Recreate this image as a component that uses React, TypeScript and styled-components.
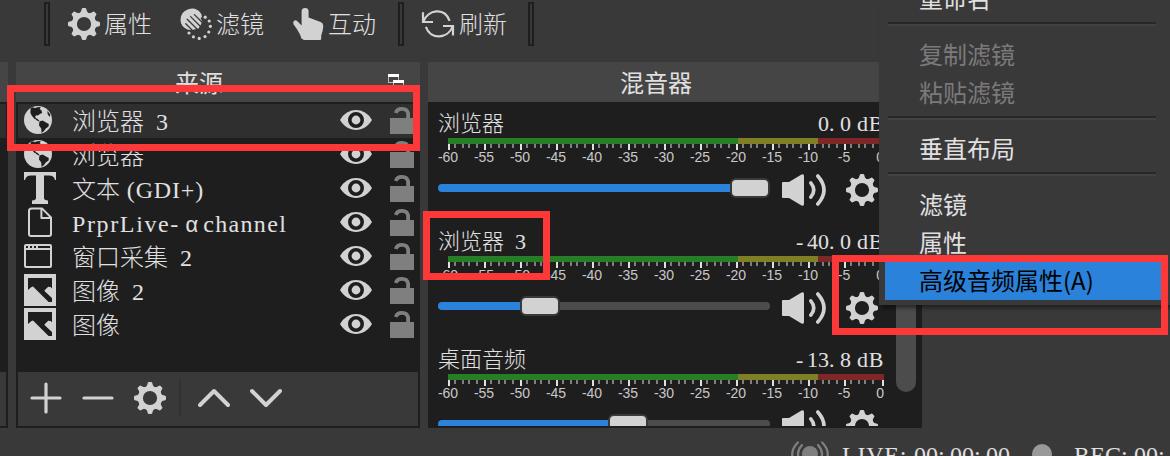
import React from 'react';
import styled, { createGlobalStyle } from 'styled-components';

const c = {
  bg: '#3a393a',
  header: '#464546',
  dark: '#1f1e1f',
  row: '#302f30',
  text: '#e1e0e1',
  icon: '#d2d2d2',
  lock: '#7f7f7f',
  groove: '#4c4c4c',
  blue: '#2a82da',
  red: '#fd3838',
};

const Global = createGlobalStyle`
  body { margin: 0; background: ${c.bg}; overflow: hidden; }
  * { box-sizing: border-box; }
  svg { display: block; flex: none; }
`;

const Window = styled.div`
  position: relative;
  width: 1170px;
  height: 456px;
  overflow: hidden;
  display: flex;
  flex-direction: column;
  background: ${c.bg};
  color: ${c.text};
  font-family: 'Noto Sans CJK SC', sans-serif;
  font-size: 24px;
`;

/* ---------- text with half-width latin cells ---------- */

const Cells = styled.span<{ $size: number }>`
  display: block;
  white-space: pre;
  font-family: 'Noto Sans CJK SC', sans-serif;
  font-weight: 300;
  font-size: ${(p) => p.$size}px;
  line-height: ${(p) => p.$size + 8}px;
`;

const Latin = styled.span<{ $track: number }>`
  font-family: 'Liberation Serif', serif;
  font-weight: 400;
  letter-spacing: ${(p) => p.$track}em;
  line-height: 0;
`;

const Alpha = styled.span`
  padding: 0 5px;
  font-family: 'Liberation Mono', monospace;
  font-size: 22px;
  line-height: 0;
`;

/* advance widths in em, used to spread a run over half-em cells */
const advance: Record<string, number> = {
  P: 0.556, r: 0.333, L: 0.611, i: 0.278, e: 0.444, '-': 0.333, c: 0.444, a: 0.444, l: 0.278,
  G: 0.722, D: 0.722, I: 0.333, '+': 0.564, '(': 0.333, ')': 0.333, B: 0.667, V: 0.722,
  E: 0.611, ':': 0.278, R: 0.667, C: 0.667, ' ': 0.25, '.': 0.25,
};

const tracking = (run: string) =>
  0.5 - [...run].reduce((sum, ch) => sum + (advance[ch] ?? 0.5), 0) / run.length;

function Label({ text, size = 24 }: { text: string; size?: number }) {
  const runs = text.match(/[0-9]+|[\x20-\x2f\x3a-\x7e]+|α|[^\x20-\x7eα]+/g) || [];
  return (
    <Cells $size={size}>
      {runs.map((run, i) => {
        if (run === 'α') return <Alpha key={i}>{run}</Alpha>;
        if (/^[\x20-\x7e]/.test(run)) return <Latin key={i} $track={tracking(run)}>{run}</Latin>;
        return <React.Fragment key={i}>{run}</React.Fragment>;
      })}
    </Cells>
  );
}

/* ---------- icons ---------- */

const teeth = [0, 45, 90, 135, 180, 225, 270, 315];

const Gear = () => (
  <svg width="32" height="32" viewBox="0 0 32 32" fill={c.icon}>
    <circle cx="16" cy="16" r="9.6" fill="none" stroke={c.icon} strokeWidth="5" />
    {teeth.map((a) => (
      <path key={a} d="M11 6 L13 3.6 L13.8 .8 Q14 0 15 0 H17 Q18 0 18.2 .8 L19 3.6 L21 6 Z" transform={`rotate(${a} 16 16)`} />
    ))}
  </svg>
);

const FilterIcon = () => (
  <svg width="32" height="32" viewBox="0 0 32 32" fill={c.icon}>
    <path d="M.5 12 A11.3 11.3 0 0 1 20.8 5.2 Q22 7 21.8 9 L20.6 10.2 L22.3 13.5 L20.6 17 L18.6 20.4 L15 21.2 L12.4 22 L8 21.8 Q.5 18.6 .5 12Z" />
    <g stroke={c.bg} strokeWidth="1.3" strokeLinecap="round">
      <path d="M5.8 15.8 L13 23" />
      <path d="M7.2 11.2 L17 21" />
      <path d="M10.6 8.6 L20 18" />
      <path d="M14.4 6.6 L22.6 14.8" />
    </g>
    {[[25.2, 9.2], [29.2, 13], [30.4, 18.3], [28.8, 24], [25, 28.6], [19.2, 30.4], [13.4, 28.8], [9, 25]].map(([x, y]) => (
      <circle key={x} cx={x} cy={y} r="1.6" />
    ))}
  </svg>
);

const Hand = () => (
  <svg width="32" height="32" viewBox="0 0 32 32" fill={c.icon}>
    <path d="M9.6 3.2 Q9.8 0 13.2 0 Q16.4 0 16.6 3.2 V9.6 L28.6 14 Q31.4 15.2 31.3 18 Q31 23 29.2 27.5 V31 Q29 32 28 32 H12 L9.4 30.6 C8.6 26 4.6 20.4 1.6 16.4 Q.6 14 2 12.8 Q3.6 11.6 5.4 13.2 L9.6 17.4Z" />
  </svg>
);

const Refresh = () => (
  <svg width="34" height="32" viewBox="0 0 34 32" fill="none" stroke={c.icon} strokeWidth="2.2">
    <path d="M2 4.2 V14 H12" />
    <path d="M2.4 13.6 C7 1.6 23.5 -1.2 28.6 12.8" />
    <path d="M32 27.6 V18 H22" />
    <path d="M31.6 18.6 C27 30.8 9.5 32.4 4.9 18.8" />
  </svg>
);

const Globe = () => (
  <svg width="28" height="28" viewBox="0 0 28 28">
    <circle cx="14" cy="14" r="14" fill={c.icon} />
    <g fill={c.dark}>
      <path d="M6.6 2.2 L9 1.2 L11 2.2 L13 1.2 L16.8 1 L15.6 3 L17.4 4.2 L18.2 7 L15.8 8 L14 9.4 L12.2 9.2 L11 11 L12.4 12.6 L10.6 13 L7.8 9.8 L6.4 7Z" />
      <path d="M10.8 12.2 L13 12.4 L15.4 14.8 L14.8 15.6 L12.2 14Z" />
      <path d="M15.4 15.4 L18.6 14.6 L22 16.4 L24.8 18 L24.6 20.4 L21.8 22.4 L20 25 L17.6 27 L17.2 22.6 L15 19.4Z" />
      <path d="M23.4 4.8 L26.4 8.8 L25.6 11 L23.6 8Z" />
    </g>
  </svg>
);

const TextIcon = () => (
  <svg width="32" height="32" viewBox="0 0 32 32" fill={c.icon}>
    <path d="M0 0 H32 V8 H31 Q30 3.6 25 3.6 H20 V26 Q20 28.4 24 28.4 V32 H8 V28.4 Q12 28.4 12 26 V3.6 H7 Q2 3.6 1 8 H0Z" />
  </svg>
);

const FileIcon = () => (
  <svg width="32" height="32" viewBox="0 0 32 32" fill="none" stroke={c.icon} strokeWidth="2" strokeLinejoin="round">
    <path d="M7.5 2.4 H18 L27 11.5 V28 Q27 30 25 30 H7 Q5 30 5 28 V4.9 Q5 2.4 7.5 2.4Z" />
    <path d="M17.4 2.6 V12 H26.8" />
  </svg>
);

const WindowIcon = () => (
  <svg width="32" height="32" viewBox="0 0 32 32">
    <rect x="1" y="5" width="26" height="22" rx="1" fill="none" stroke={c.icon} strokeWidth="2" />
    <path d="M0 6 H28 V10 H0Z" fill={c.icon} />
    <path d="M2 7 H4 M6 7 H8 M10 7 H12 M14 7 H26" stroke={c.dark} strokeWidth="2" />
  </svg>
);

const ImageIcon = () => (
  <svg width="32" height="32" viewBox="0 0 32 32">
    <path d="M0 0 H32 V32 H0Z" fill={c.icon} />
    <path d="M4 4 H28 V14.4 L26.4 12.8 L20.6 17 L28 24 V28 H24.6 L9 12.6 Q8 12.4 4 16Z" fill={c.dark} />
    <path d="M20.4 16.4 L24.2 12.8 Q25.2 12.4 26 13.2 L28 15 V23.6Z" fill={c.icon} />
  </svg>
);

const Eye = () => (
  <svg width="32" height="20" viewBox="0 0 32 20">
    <path d="M0 10 C7.5 -3.3 24.5 -3.3 32 10 C24.5 23.3 7.5 23.3 0 10Z" fill={c.icon} />
    <circle cx="16" cy="10" r="6.2" fill="none" stroke={c.dark} strokeWidth="3.6" />
  </svg>
);

const Lock = () => (
  <svg width="24" height="28" viewBox="0 0 24 28">
    <rect y="12" width="24" height="16" fill={c.lock} />
    <path d="M5.8 7 A6.3 5.4 0 0 1 18.1 7.4 V13" fill="none" stroke={c.lock} strokeWidth="3.8" />
  </svg>
);

const PopOutBox = styled.span`
  margin: 0 0 0 6px;
`;

const PopOut = () => (
  <PopOutBox>
    <svg width="16" height="16" viewBox="0 0 16 16" shapeRendering="crispEdges">
      <path d="M.5 1 V8.5 H10.5 V1" fill="none" stroke="#bbb" />
      <rect width="11" height="2.5" fill="#fff" />
      <rect x="5.5" y="7" width="10" height="7" fill={c.header} stroke="#bbb" />
      <rect x="5" y="6" width="11" height="3" fill="#fff" />
    </svg>
  </PopOutBox>
);

const Speaker = () => (
  <svg width="44" height="32" viewBox="0 0 44 32">
    <path d="M1 8 H7 L19.5 .6 Q22 -.6 22 2 V30 Q22 32.6 19.5 31.4 L7 24 H1 Q0 24 0 23 V9 Q0 8 1 8Z" fill={c.icon} />
    <g fill="none" stroke={c.icon} strokeWidth="3.6" strokeLinecap="round">
      <path d="M28.8 8.8 Q34.8 16 28.8 23.2" />
      <path d="M35.8 2 Q48.2 16 35.8 30" />
    </g>
  </svg>
);

const Stroke = ({ d, w = 4 }: { d: string; w?: number }) => (
  <svg width="32" height="32" viewBox="0 0 32 32" fill="none" stroke={c.icon} strokeWidth={w} strokeLinecap="round" strokeLinejoin="round">
    <path d={d} />
  </svg>
);

const Broadcast = () => (
  <svg width="38" height="26" viewBox="0 0 38 26" fill="none" stroke={c.lock} strokeWidth="2.2" strokeLinecap="round">
    <circle cx="19" cy="13" r="8" fill={c.lock} stroke="none" />
    <path d="M11 4 Q3 13 11 22 M27 4 Q35 13 27 22" />
    <path d="M6.8 1.4 Q-4.4 13 6.8 25 M31.2 1.4 Q42.4 13 31.2 25" />
  </svg>
);

/* ---------- toolbar ---------- */

const Toolbar = styled.div`
  display: flex;
  height: 62px;
  flex: none;
  padding-left: 44px;
  align-items: flex-start;
`;

const Handle = styled.i<{ $left?: number }>`
  width: 6px;
  height: 44px;
  margin: 2px 0 0 ${(p) => p.$left ?? 0}px;
  border: 2px solid ${c.dark};
`;

const ToolButton = styled.div<{ $left: number; $w: number }>`
  display: flex;
  align-items: center;
  gap: 4px;
  height: 48px;
  width: ${(p) => p.$w}px;
  margin-left: ${(p) => p.$left}px;

  ${Cells} {
    margin-bottom: 2px;
  }
`;

/* ---------- docks ---------- */

const Docks = styled.div`
  display: flex;
  height: 366px;
  flex: none;
`;

const Dock = styled.section<{ $w: number; $gap?: number }>`
  width: ${(p) => p.$w}px;
  margin-right: ${(p) => p.$gap ?? 8}px;
  background: ${c.dark};
  display: flex;
  flex-direction: column;
  overflow: hidden;
`;

const DockTitle = styled.header`
  height: 40px;
  flex: none;
  background: ${c.header};
  display: flex;
  align-items: center;
  padding-right: 16px;

  h2 {
    flex: 1;
    margin: 0;
    text-align: center;
    font-size: 24px;
    line-height: 32px;
    font-weight: 400;
  }
`;

const EdgeRow = styled.div`
  width: 6px;
  height: 34px;
  margin-top: 2px;
  background: ${c.row};
`;

const EdgeBar = styled.div`
  width: 6px;
  height: 54px;
  margin: auto 0 2px;
  background: ${c.bg};
`;

const List = styled.div`
  flex: 1;
  padding: 2px 2px 0;
`;

const SourceRow = styled.div<{ $selected?: boolean }>`
  height: 34px;
  display: flex;
  align-items: center;
  padding: 0 4px 0 6px;
  background: ${(p) => (p.$selected ? c.row : 'transparent')};
`;

const IconCell = styled.span`
  width: 48px;
  height: 32px;
  margin-bottom: 2px;
  display: flex;
  align-items: center;
`;

const RowName = styled.span`
  flex: 1;
  display: flex;
  margin-bottom: 2px;
`;

const LockCell = styled.span`
  margin: 0 0 2px 18px;
`;

const EyeCell = styled.span`
  margin-bottom: 2px;
`;

const DockFooter = styled.footer`
  height: 54px;
  margin: 0 2px 2px;
  padding: 0 12px 2px;
  background: ${c.bg};
  display: flex;
  align-items: center;
  gap: 20px;
`;

const FooterSplit = styled.i`
  width: 2px;
  height: 38px;
  margin: 0 -3px 0 -7px;
  background: #333233;
`;

/* ---------- mixer ---------- */

const MixerView = styled.div`
  flex: 1;
  margin-bottom: 2px;
  overflow: hidden;
  display: flex;
  justify-content: space-between;
`;

const Tracks = styled.div`
  width: 456px;
  padding: 4px 0 0 10px;
  height: 324px;
  overflow: hidden;
`;

const Track = styled.div`
  height: 118px;
  width: 446px;
`;

const TrackHead = styled.div`
  height: 32px;
  display: flex;
  justify-content: space-between;
  align-items: flex-start;
`;

const Meter = styled.svg`
  margin-bottom: 8px;
`;

const Controls = styled.div`
  height: 32px;
  display: flex;
  align-items: center;
`;

const Groove = styled.div<{ $fill: number }>`
  width: 332px;
  height: 8px;
  margin: 0 12px 4px 0;
  border-radius: 4px;
  display: flex;
  align-items: center;
  background: linear-gradient(to right, ${c.blue} ${(p) => p.$fill}px, ${c.groove} ${(p) => p.$fill}px);
`;

const Thumb = styled.div<{ $x: number }>`
  flex: none;
  width: 40px;
  height: 20px;
  margin-left: ${(p) => p.$x}px;
  border: 2px solid ${c.bg};
  border-radius: 6px;
  background: ${c.icon};
`;

const GearCell = styled.span`
  margin-left: 20px;
`;

const Scrollbar = styled.div`
  width: 20px;
  height: 290px;
  margin-right: 6px;
  border-radius: 10px;
  background: ${c.groove};
`;

const marks = [-60, -55, -50, -45, -40, -35, -30, -25, -20, -15, -10, -5, 0];

function Level() {
  return (
    <Meter width="446" height="28" viewBox="0 0 446 28">
      <g shapeRendering="crispEdges">
        <rect x="10" width="290" height="6" fill="#267f26" />
        <rect x="300" width="80" height="6" fill="#7f7f26" />
        <rect x="380" width="66" height="6" fill="#7f2626" />
        {marks.map((m, i) => (
          <g key={m}>
            <rect x={m === 0 ? 444 : 10 + i * 36} y="6" width="2" height="6" fill={c.text} />
            {m !== 0 && [6, 14, 20, 28].map((o) => (
              <rect key={o} x={10 + i * 36 + o} y="6" width="2" height="4" fill="#7f7f7f" />
            ))}
          </g>
        ))}
      </g>
      {marks.map((m, i) => (
        <text
          key={m}
          x={m === 0 ? 446 : 10 + i * 36}
          y="24"
          textAnchor={m === 0 ? 'end' : 'middle'}
          fontFamily="Liberation Sans, sans-serif"
          fontSize="14"
          fill="#c8c8c8"
        >
          {m}
        </text>
      ))}
    </Meter>
  );
}

function MixerTrack({ name, db, thumb }: { name: string; db: string; thumb: number }) {
  return (
    <Track>
      <TrackHead>
        <Label text={name} size={22} />
        <Label text={db} size={22} />
      </TrackHead>
      <Level />
      <Controls>
        <Groove $fill={thumb + 10}>
          <Thumb $x={thumb} />
        </Groove>
        <Speaker />
        <GearCell><Gear /></GearCell>
      </Controls>
    </Track>
  );
}

/* ---------- status bar ---------- */

const Status = styled.div`
  display: flex;
  align-items: flex-start;
  padding: 13px 0 0 791px;
  height: 28px;
  white-space: nowrap;
  overflow: hidden;
`;

const StatusText = styled.span<{ $left: number }>`
  display: flex;
  margin: -4px 0 0 ${(p) => p.$left}px;
`;

const Dot = styled.i`
  flex: none;
  width: 20px;
  height: 20px;
  margin: 3px 0 0 22px;
  border-radius: 50%;
  background: #999;
`;

/* ---------- context menu ---------- */

const Menu = styled.div`
  position: absolute;
  left: 879px;
  top: 0;
  width: 300px;
  height: 305px;
  background: ${c.bg};
  box-shadow: 3px 3px 4px rgba(0, 0, 0, 0.45);
  padding: 0 6px;
`;

const MenuItem = styled.div<{ $state?: 'off' | 'on'; $cut?: boolean }>`
  height: ${(p) => (p.$cut ? 18 : 38)}px;
  width: 276px;
  padding: 0 0 ${(p) => (p.$cut ? 2 : 2)}px 34px;
  display: flex;
  align-items: ${(p) => (p.$cut ? 'flex-end' : 'center')};
  line-height: 36px;
  color: ${(p) => (p.$state === 'off' ? '#7b7a7b' : p.$state === 'on' ? '#000' : c.text)};
  background: ${(p) => (p.$state === 'on' ? c.blue : 'transparent')};
`;

const MenuLine = styled.div`
  height: 4px;
  width: 268px;
  margin: 4px 0 10px 3px;
  border-top: 2px solid #282728;
  border-bottom: 2px solid #434243;
`;

const Highlight = styled.div<{ $x: number; $y: number; $w: number; $h: number }>`
  position: absolute;
  left: ${(p) => p.$x}px;
  top: ${(p) => p.$y}px;
  width: ${(p) => p.$w}px;
  height: ${(p) => p.$h}px;
  border: 7px solid ${c.red};
`;

const sources = [
  { name: '浏览器 3', Icon: Globe },
  { name: '浏览器', Icon: Globe },
  { name: '文本 (GDI+)', Icon: TextIcon },
  { name: 'PrprLive-αchannel', Icon: FileIcon },
  { name: '窗口采集 2', Icon: WindowIcon },
  { name: '图像 2', Icon: ImageIcon },
  { name: '图像', Icon: ImageIcon },
];

export default function App() {
  return (
    <Window>
      <Global />
      <Toolbar>
        <Handle />
        <ToolButton $left={18} $w={84}><Gear /><Label text="属性" /></ToolButton>
        <ToolButton $left={28} $w={84}><FilterIcon /><Label text="滤镜" /></ToolButton>
        <ToolButton $left={28} $w={85}><Hand /><Label text="互动" /></ToolButton>
        <Handle $left={21} />
        <ToolButton $left={17} $w={86}><Refresh /><Label text="刷新" /></ToolButton>
        <Handle $left={21} />
      </Toolbar>

      <Docks>
        <Dock $w={8}>
          <DockTitle />
          <EdgeRow />
          <EdgeBar />
        </Dock>

        <Dock $w={404}>
          <DockTitle>
            <h2>来源</h2>
            <PopOut />
          </DockTitle>
          <List>
            {sources.map(({ name, Icon }, i) => (
              <SourceRow key={name} $selected={i === 0}>
                <IconCell><Icon /></IconCell>
                <RowName><Label text={name} /></RowName>
                <EyeCell><Eye /></EyeCell>
                <LockCell><Lock /></LockCell>
              </SourceRow>
            ))}
          </List>
          <DockFooter>
            <Stroke w={3.2} d="M2 16 H30 M16 2 V30" />
            <Stroke w={3.2} d="M2 16 H30" />
            <Gear />
            <FooterSplit />
            <Stroke d="M2 23 L16 9 L30 23" />
            <Stroke d="M2 9 L16 23 L30 9" />
          </DockFooter>
        </Dock>

        <Dock $w={494} $gap={0}>
          <DockTitle>
            <h2>混音器</h2>
            <PopOut />
          </DockTitle>
          <MixerView>
            <Tracks>
              <MixerTrack name="浏览器" db="0.0 dB" thumb={292} />
              <MixerTrack name="浏览器 3" db="-40.0 dB" thumb={82} />
              <MixerTrack name="桌面音频" db="-13.8 dB" thumb={170} />
            </Tracks>
            <Scrollbar />
          </MixerView>
        </Dock>
      </Docks>

      <Status>
        <Broadcast />
        <StatusText $left={13}><Label text="LIVE: 00:00:00" /></StatusText>
        <Dot />
        <StatusText $left={22}><Label text="REC: 00:00:00" /></StatusText>
      </Status>

      <Menu>
        <MenuItem $cut>重命名</MenuItem>
        <MenuLine />
        <MenuItem $state="off">复制滤镜</MenuItem>
        <MenuItem $state="off">粘贴滤镜</MenuItem>
        <MenuLine />
        <MenuItem>垂直布局</MenuItem>
        <MenuLine />
        <MenuItem>滤镜</MenuItem>
        <MenuItem>属性</MenuItem>
        <MenuItem $state="on">高级音频属性(A)</MenuItem>
      </Menu>

      <Highlight $x={7} $y={85} $w={413} $h={66} />
      <Highlight $x={423} $y={211} $w={127} $h={69} />
      <Highlight $x={832} $y={255} $w={336} $h={80} />
    </Window>
  );
}
